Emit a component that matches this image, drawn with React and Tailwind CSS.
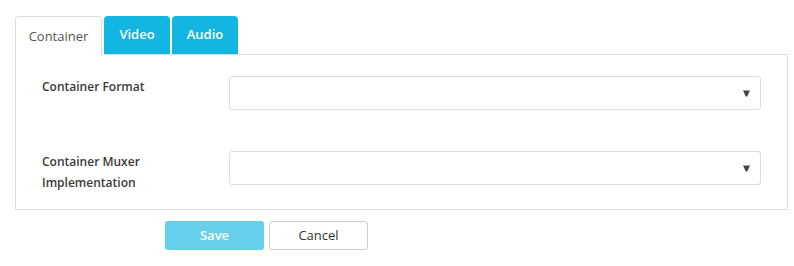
const font = { fontFamily: '"Open Sans", "Noto Sans", sans-serif' }

function Select() {
  return (
    <div className="relative h-[34px] flex-1 rounded-[3px] border border-[#dcdcdc] bg-white">
      <svg className="absolute right-[10px] top-[13px]" width="7" height="7" viewBox="0 0 7 7">
        <path d="M0 0.5 H7 L4.2 6.5 H2.8 Z" fill="#444" />
      </svg>
    </div>
  )
}

function Row({ label, className = '' }) {
  return (
    <div className={`flex h-[34px] items-start ${className}`}>
      <div className="w-[187px] shrink-0 text-[12px] font-semibold leading-[21px] text-[#3a3a3a]">{label}</div>
      <Select />
    </div>
  )
}

export default function App() {
  return (
    <div className="h-[266px] w-[794px] bg-white" style={font}>
      <div className="ml-[15px] w-[773px] pt-[16px]">
        <div className="flex h-[39px] items-stretch">
          <div className="-mb-px mr-[2px] flex w-[87px] items-center justify-center rounded-t-[4px] border border-b-0 border-[#dcdcdc] bg-white text-[13px] text-[#555]">
            Container
          </div>
          <div className="flex flex-1 items-stretch border-b border-[#dcdcdc]">
            <div className="mr-[2px] flex w-[66px] items-center justify-center rounded-t-[4px] bg-[#13b5e1] text-[13px] font-semibold text-white">
              Video
            </div>
            <div className="flex w-[66px] items-center justify-center rounded-t-[4px] bg-[#13b5e1] text-[13px] font-semibold text-white">
              Audio
            </div>
          </div>
        </div>
        <div className="border border-t-0 border-[#dcdcdc] px-[26px] pb-[24px] pt-[21px]">
          <Row label="Container Format" />
          <Row className="mt-[41px]" label={<>Container Muxer<br />Implementation</>} />
        </div>
      </div>
      <div className="ml-[165px] mt-[11px] flex gap-[5px]">
        <button className="h-[29px] w-[99px] rounded-[3px] bg-[#66cfec] text-[13px] font-semibold text-white">Save</button>
        <button className="h-[29px] w-[99px] rounded-[3px] border border-[#ccc] bg-white text-[13px] text-[#333]">Cancel</button>
      </div>
    </div>
  )
}
